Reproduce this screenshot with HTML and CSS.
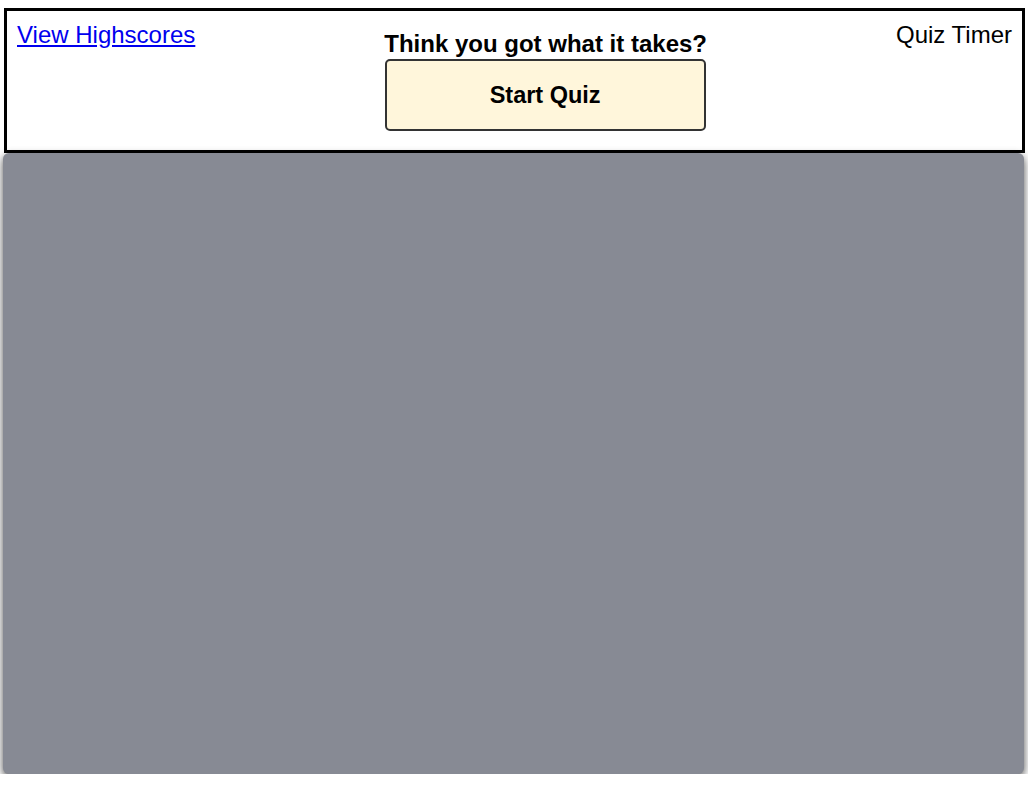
FILE: index.html
```html
<!DOCTYPE html>
<html lang="en">
<head>
<meta charset="utf-8">
<title>Code Quiz</title>
<link rel="stylesheet" href="styles.css">
</head>
<body>
<header class="top-bar">
  <a class="highscores-link" href="#">View Highscores</a>
  <div class="intro">
    <h2 class="intro-title">Think you got what it takes?</h2>
    <button class="start-btn" type="button">Start Quiz</button>
  </div>
  <div class="timer">Quiz Timer</div>
</header>
<main class="quiz-panel"></main>
</body>
</html>
```

FILE: styles.css
```css
html, body {
  margin: 0;
  padding: 0;
  background: #ffffff;
}

body {
  font-family: "Liberation Sans", Arial, sans-serif;
  color: #000000;
}

.top-bar {
  display: flex;
  justify-content: space-between;
  align-items: flex-start;
  margin: 8px 3px 0 4px;
  padding: 10px;
  height: 119px;
  border: 3px solid #000000;
  background: #ffffff;
}

.highscores-link {
  font-size: 24px;
  color: #0000ee;
  text-decoration: underline;
}

.timer {
  font-size: 24px;
}

.intro {
  display: flex;
  flex-direction: column;
  align-items: center;
  width: 320px;
  margin-top: 10px;
}

.intro-title {
  margin: 0 0 2px 0;
  font-size: 24px;
  font-weight: bold;
  white-space: nowrap;
  line-height: 26px;
}

.start-btn {
  box-sizing: border-box;
  width: 321px;
  height: 72px;
  margin-left: -1px;
  background: #fff6db;
  border: 2px solid #333333;
  border-radius: 5px;
  font-family: "Liberation Sans", Arial, sans-serif;
  font-size: 23.5px;
  font-weight: bold;
  color: #000000;
  padding: 0;
}

.quiz-panel {
  display: block;
  margin: 0 4px 0 3px;
  height: 621px;
  background: #878a94;
  border-radius: 6px;
  box-shadow: 0 3px 8px rgba(0, 0, 0, 0.7);
  position: relative;
}
```
